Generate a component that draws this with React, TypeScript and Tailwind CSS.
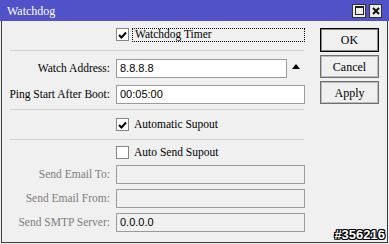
import React from "react";

function Check({ checked }: { checked: boolean }) {
  return (
    <div className="w-[13px] h-[13px] bg-white border border-[#858585] flex items-center justify-center shrink-0">
      {checked && (
        <svg width="9" height="8" viewBox="0 0 9 8">
          <path d="M1 4 L3.5 6.5 L8 1.5" stroke="#000" strokeWidth="2" fill="none" />
        </svg>
      )}
    </div>
  );
}

function Sep() {
  return (
    <div className="ml-[8px] w-[294px] flex flex-col">
      <div className="h-px bg-[#d0d0d0]" />
    </div>
  );
}

function Field({
  label,
  value,
  disabled,
  width,
  extra,
  className,
}: {
  label: string;
  value?: string;
  disabled?: boolean;
  width: string;
  extra?: React.ReactNode;
  className?: string;
}) {
  return (
    <div className={"flex items-center h-[19px] " + (className ?? "")}>
      <div
        className={
          "w-[108px] text-right pr-0 leading-none whitespace-nowrap " +
          (disabled ? "text-[#7d7d7d]" : "text-black")
        }
      >
        {label}
      </div>
      <div
        className={
          "ml-[6px] h-[19px] border border-[#9a9a9a] flex items-center pl-[3px] font-['Liberation_Sans',Arial,sans-serif] text-[11px] text-black " +
          width +
          (disabled ? " bg-[#f0f0f0]" : " bg-white")
        }
      >
        {value}
      </div>
      {extra}
    </div>
  );
}

export default function App() {
  return (
    <div className="w-[389px] h-[244px] relative bg-[#f0f0f0] flex flex-col overflow-hidden font-['Liberation_Serif','Times_New_Roman',serif] text-[11.5px] text-black">
      <div className="h-[21px] bg-[#5151c8] flex items-center pl-[7px] pr-[7px] shrink-0">
        <span className="text-white text-[12px] leading-none pt-px">Watchdog</span>
        <div className="ml-auto flex gap-[3px] items-center">
          <div className="w-[14px] h-[14px] bg-[#ececec] border border-[#303030] flex items-center justify-center">
            <div className="w-[9px] h-[9px] border border-[#202020] border-t-2" />
          </div>
          <div className="w-[13px] h-[14px] bg-[#ececec] border border-[#303030] flex items-center justify-center">
            <svg width="8" height="8" viewBox="0 0 8 8">
              <path d="M1 1 L7 7 M7 1 L1 7" stroke="#111" strokeWidth="2" />
            </svg>
          </div>
        </div>
      </div>
      <div className="flex-1 flex mx-px mb-px border-x border-b border-[#3c3c3c]">
        <div className="w-[318px] flex flex-col pt-[7px]">
          <div className="flex items-center h-[13px] ml-[114px]">
            <Check checked />
            <div className="ml-[3px] w-[173px] h-[14px] border border-dotted border-black flex items-center pl-[2px] leading-none">
              Watchdog Timer
            </div>
          </div>
          <div className="mt-[9px]">
            <Sep />
          </div>
          <Field
            className="mt-[8px]"
            label="Watch Address:"
            value="8.8.8.8"
            width="w-[171px]"
            extra={
              <svg className="ml-[5px] mb-[4px]" width="8" height="5" viewBox="0 0 8 5">
                <path d="M4 0 L8 5 L0 5 Z" fill="#000" />
              </svg>
            }
          />
          <Field className="mt-[7px]" label="Ping Start After Boot:" value="00:05:00" width="w-[189px]" />
          <div className="mt-[5px]">
            <Sep />
          </div>
          <div className="flex items-center h-[13px] ml-[114px] mt-[8px]">
            <Check checked />
            <span className="ml-[5px] leading-none">Automatic Supout</span>
          </div>
          <div className="mt-[8px]">
            <Sep />
          </div>
          <div className="flex items-center h-[13px] ml-[114px] mt-[6px]">
            <Check checked={false} />
            <span className="ml-[5px] leading-none">Auto Send Supout</span>
          </div>
          <Field className="mt-[6px]" label="Send Email To:" disabled width="w-[189px]" />
          <Field className="mt-[5px]" label="Send Email From:" disabled width="w-[189px]" />
          <Field className="mt-[5px]" label="Send SMTP Server:" disabled value="0.0.0.0" width="w-[189px]" />
        </div>
        <div className="flex flex-col pt-[7px] gap-[3px]">
          <button className="w-[59px] h-[24px] border border-black shadow-[inset_0_0_0_1px_#8a8a8a] bg-[#f0f0f0] leading-none text-[12px]">
            OK
          </button>
          <button className="w-[59px] h-[23px] border border-[#6f6f6f] shadow-[inset_0_0_0_1px_#bdbdbd] bg-[#f0f0f0] leading-none text-[12px]">
            Cancel
          </button>
          <button className="w-[59px] h-[23px] border border-[#6f6f6f] shadow-[inset_0_0_0_1px_#bdbdbd] bg-[#f0f0f0] leading-none text-[12px]">
            Apply
          </button>
        </div>
      </div>
      <span className="absolute right-[4px] bottom-[3px] font-['Liberation_Sans',Arial,sans-serif] font-bold text-[13px] leading-none text-white [text-shadow:1px_0_0_#000,-1px_0_0_#000,0_1px_0_#000,0_-1px_0_#000,1px_1px_0_#000,-1px_-1px_0_#000,1px_-1px_0_#000,-1px_1px_0_#000]">
        #356216
      </span>
    </div>
  );
}
